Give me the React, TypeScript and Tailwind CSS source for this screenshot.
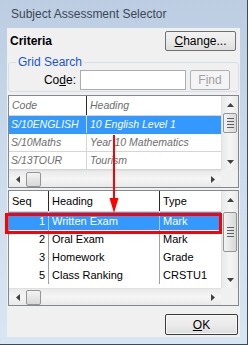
import React from "react";

const F = { fontFamily: '"Liberation Sans", Arial, sans-serif' };

function UpArrow() {
  return (
    <svg width="7" height="4" viewBox="0 0 7 4"><path d="M0 4 L3.5 0 L7 4 Z" fill="#404040" /></svg>
  );
}
function DownArrow() {
  return (
    <svg width="7" height="4" viewBox="0 0 7 4"><path d="M0 0 L3.5 4 L7 0 Z" fill="#404040" /></svg>
  );
}
function LeftArrow() {
  return (
    <svg width="4" height="7" viewBox="0 0 4 7"><path d="M4 0 L0 3.5 L4 7 Z" fill="#404040" /></svg>
  );
}
function RightArrow() {
  return (
    <svg width="4" height="7" viewBox="0 0 4 7"><path d="M0 0 L4 3.5 L0 7 Z" fill="#404040" /></svg>
  );
}

function VGrip() {
  return (
    <div className="flex flex-col gap-[2px] items-center">
      <div className="w-[7px] h-px bg-[#606060]" />
      <div className="w-[7px] h-px bg-[#606060]" />
      <div className="w-[7px] h-px bg-[#606060]" />
      <div className="w-[7px] h-px bg-[#606060]" />
    </div>
  );
}

function VScroll({ thumbTop, thumbH }: { thumbTop: number; thumbH: number }) {
  return (
    <div className="w-[17px] h-full flex flex-col bg-gradient-to-r from-[#e9e9e9] via-[#f5f5f5] to-[#e9e9e9] border-l border-[#e0e0e0]">
      <div className="h-[17px] flex items-center justify-center shrink-0"><UpArrow /></div>
      <div className="flex-1 flex flex-col">
        <div style={{ height: thumbTop }} />
        <div
          className="mx-[1px] rounded-[2px] border border-[#959595] bg-gradient-to-r from-[#f3f3f3] to-[#d8d8d8] flex items-center justify-center"
          style={{ height: thumbH }}
        >
          <VGrip />
        </div>
      </div>
      <div className="h-[17px] flex items-center justify-center shrink-0"><DownArrow /></div>
    </div>
  );
}

function HScroll() {
  return (
    <div className="h-[17px] flex items-center bg-gradient-to-b from-[#e9e9e9] via-[#f5f5f5] to-[#e9e9e9] border-t border-[#e0e0e0]">
      <div className="w-[17px] h-full flex items-center justify-center shrink-0"><LeftArrow /></div>
      <div className="w-[15px] h-[15px] rounded-[2px] border border-[#959595] bg-gradient-to-b from-[#f3f3f3] to-[#d8d8d8]" />
      <div className="flex-1" />
      <div className="w-[17px] h-full flex items-center justify-center shrink-0"><RightArrow /></div>
    </div>
  );
}

export default function App() {
  const upperRows = [
    ["S/10ENGLISH", "10 English Level 1"],
    ["S/10Maths", "Year 10 Mathematics"],
    ["S/13TOUR", "Tourism"],
  ];
  const lowerRows = [
    ["1", "Written Exam", "Mark"],
    ["2", "Oral Exam", "Mark"],
    ["3", "Homework", "Grade"],
    ["5", "Class Ranking", "CRSTU1"],
  ];
  return (
    <div
      className="relative w-[248px] h-[345px] overflow-hidden bg-gradient-to-b from-[#bccde2] via-[#cddced] to-[#d8e5f3] border-r border-b border-[#3e4a57]"
      style={F}
    >
      {/* title bar */}
      <div className="h-[28px] pl-[11px] pt-[7px] text-[12px] leading-[15px] text-[#3b4756]">
        Subject Assessment Selector
      </div>
      {/* client */}
      <div className="ml-[7px] w-[233px] h-[309px] bg-[#f0f0f0] flex flex-col text-[12px] text-black">
        {/* row 1 */}
        <div className="mt-[3px] h-[20px] flex items-center justify-between pl-[3px] pr-[4px]">
          <span className="font-bold text-[12px]">Criteria</span>
          <button className="w-[71px] h-[20px] border border-[#707070] rounded-[2px] bg-gradient-to-b from-[#f2f2f2] via-[#ebebeb] to-[#dddddd] text-[12px] leading-none flex items-center justify-center">
            <span><span className="underline">C</span>hange...</span>
          </button>
        </div>
        {/* group box */}
        <fieldset className="mt-[4px] mx-[1px] h-[37px] border border-[#d5dfe5] rounded-[3px] px-[6px] pt-0 pb-0">
          <legend className="px-[2px] ml-[1px] text-[12px] leading-[14px] text-[#1a56c9]">Grid Search</legend>
          <div className="flex items-center h-[20px] mt-[1px]">
            <span className="w-[65px] text-right pr-[4px] text-[12px]">Co<span className="underline">d</span>e:</span>
            <div className="w-[106px] h-[20px] border border-[#abadb3] bg-white" />
            <button className="ml-[4px] w-[40px] h-[20px] border border-[#adb2b5] rounded-[2px] bg-[#f4f4f4] text-[#a0a0a0] text-[12px] flex items-center justify-center">
              <span>F<span className="underline">i</span>nd</span>
            </button>
          </div>
        </fieldset>
        {/* upper grid */}
        <div className="mt-[3px] mx-[1px] h-[93px] border border-[#828790] bg-white flex flex-col">
          <div className="flex flex-1 min-h-0">
            <div className="flex-1 flex flex-col text-[10.5px] italic text-[#6d6d6d]">
              <div className="h-[20px] flex border-b border-[#d5d5d5]">
                <div className="w-[78px] pl-[3px] flex items-center border-r border-[#2a2a2a]">Code</div>
                <div className="flex-1 pl-[3px] flex items-center">Heading</div>
              </div>
              {upperRows.map((r, i) => (
                <div
                  key={i}
                  className={
                    "h-[18px] flex border-b " +
                    (i === 0 ? "bg-[#3399ff] text-white border-[#3399ff]" : "border-[#d5d5d5]")
                  }
                >
                  <div className={"w-[78px] pl-[2px] flex items-center whitespace-nowrap overflow-hidden border-r " + (i === 0 ? "border-[#d8d8d8]" : "border-[#d5d5d5]")}>{r[0]}</div>
                  <div className="flex-1 pl-[3px] flex items-center whitespace-nowrap">{r[1]}</div>
                </div>
              ))}
            </div>
            <VScroll thumbTop={0} thumbH={20} />
          </div>
          <div className="flex">
            <div className="flex-1"><HScroll /></div>
            <div className="w-[17px] h-[17px] bg-[#f0f0f0]" />
          </div>
        </div>
        {/* lower grid */}
        <div className="mt-[2px] mx-[1px] h-[116px] border border-[#828790] bg-white flex flex-col">
          <div className="flex flex-1 min-h-0">
            <div className="flex-1 flex flex-col text-[11px] text-black">
              <div className="h-[21px] flex border-b border-[#d5d5d5]">
                <div className="w-[40px] pl-[3px] flex items-center border-r border-[#2a2a2a]">Seq</div>
                <div className="w-[111px] pl-[3px] flex items-center border-r border-[#2a2a2a]">Heading</div>
                <div className="flex-1 pl-[3px] flex items-center">Type</div>
              </div>
              {lowerRows.map((r, i) => (
                <div key={i} className={"h-[18px] flex " + (i === 0 ? "bg-[#3399ff] text-white" : "")}>
                  <div className={"w-[40px] pr-[3px] flex items-center justify-end border-r " + (i === 0 ? "border-[#9fcfff]" : "border-[#a0a0a0]")}>{r[0]}</div>
                  <div className={"w-[111px] pl-[3px] flex items-center border-r " + (i === 0 ? "border-[#9fcfff]" : "border-[#a0a0a0]")}>{r[1]}</div>
                  <div className="flex-1 pl-[3px] flex items-center">{r[2]}</div>
                </div>
              ))}
              <div className="flex-1" />
            </div>
            <VScroll thumbTop={4} thumbH={40} />
          </div>
          <div className="flex">
            <div className="flex-1"><HScroll /></div>
            <div className="w-[17px] h-[17px] bg-[#f0f0f0]" />
          </div>
        </div>
        {/* OK */}
        <div className="mt-[8px] flex justify-end pr-[2px]">
          <button className="w-[73px] h-[21px] border border-[#3c3c3c] rounded-[2px] bg-gradient-to-b from-[#f2f2f2] via-[#ebebeb] to-[#dddddd] text-[12px] flex items-center justify-center shadow-[inset_0_0_0_1px_#f8f8f8]">
            <span><span className="underline">O</span>K</span>
          </button>
        </div>
      </div>

      {/* red highlight box */}
      <div className="absolute left-[5px] top-[213px] w-[217px] h-[21px] border-[3px] border-[#ff0000]" />
      {/* red arrow */}
      <svg className="absolute left-[108px] top-[135px]" width="12" height="80" viewBox="0 0 12 80">
        <line x1="6" y1="0" x2="6" y2="66" stroke="#ff0000" strokeWidth="2" />
        <path d="M1.5 63 L10.5 63 L6 78 Z" fill="#ff0000" />
      </svg>
    </div>
  );
}
